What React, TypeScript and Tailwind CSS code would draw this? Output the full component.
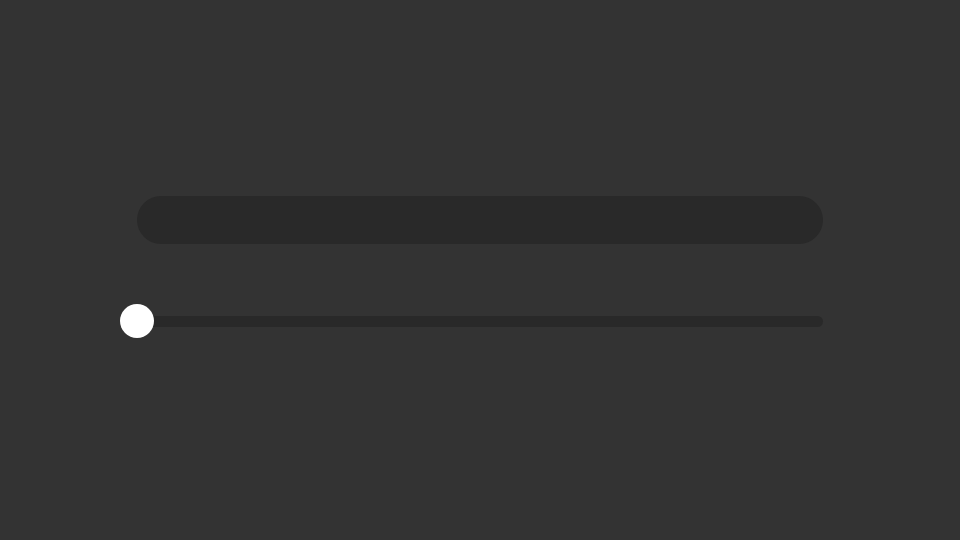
import React, { useState } from 'react';

export default function App() {
  const [value] = useState<number>(0);

  return (
    <div className="w-[960px] h-[540px] bg-[#333333] pt-[196px] flex flex-col items-center">
      <div className="w-[686px]">
        <div className="h-12 w-full rounded-full bg-[#292929]" />
        <div className="relative mt-[60px] h-[34px] w-full">
          <div className="absolute left-0 right-0 top-[12px] h-[11px] rounded-full bg-[#292929]" />
          <div
            className="absolute top-0 h-[34px] w-[34px] -translate-x-1/2 rounded-full bg-white"
            style={{ left: `${value}%` }}
          />
        </div>
      </div>
    </div>
  );
}
